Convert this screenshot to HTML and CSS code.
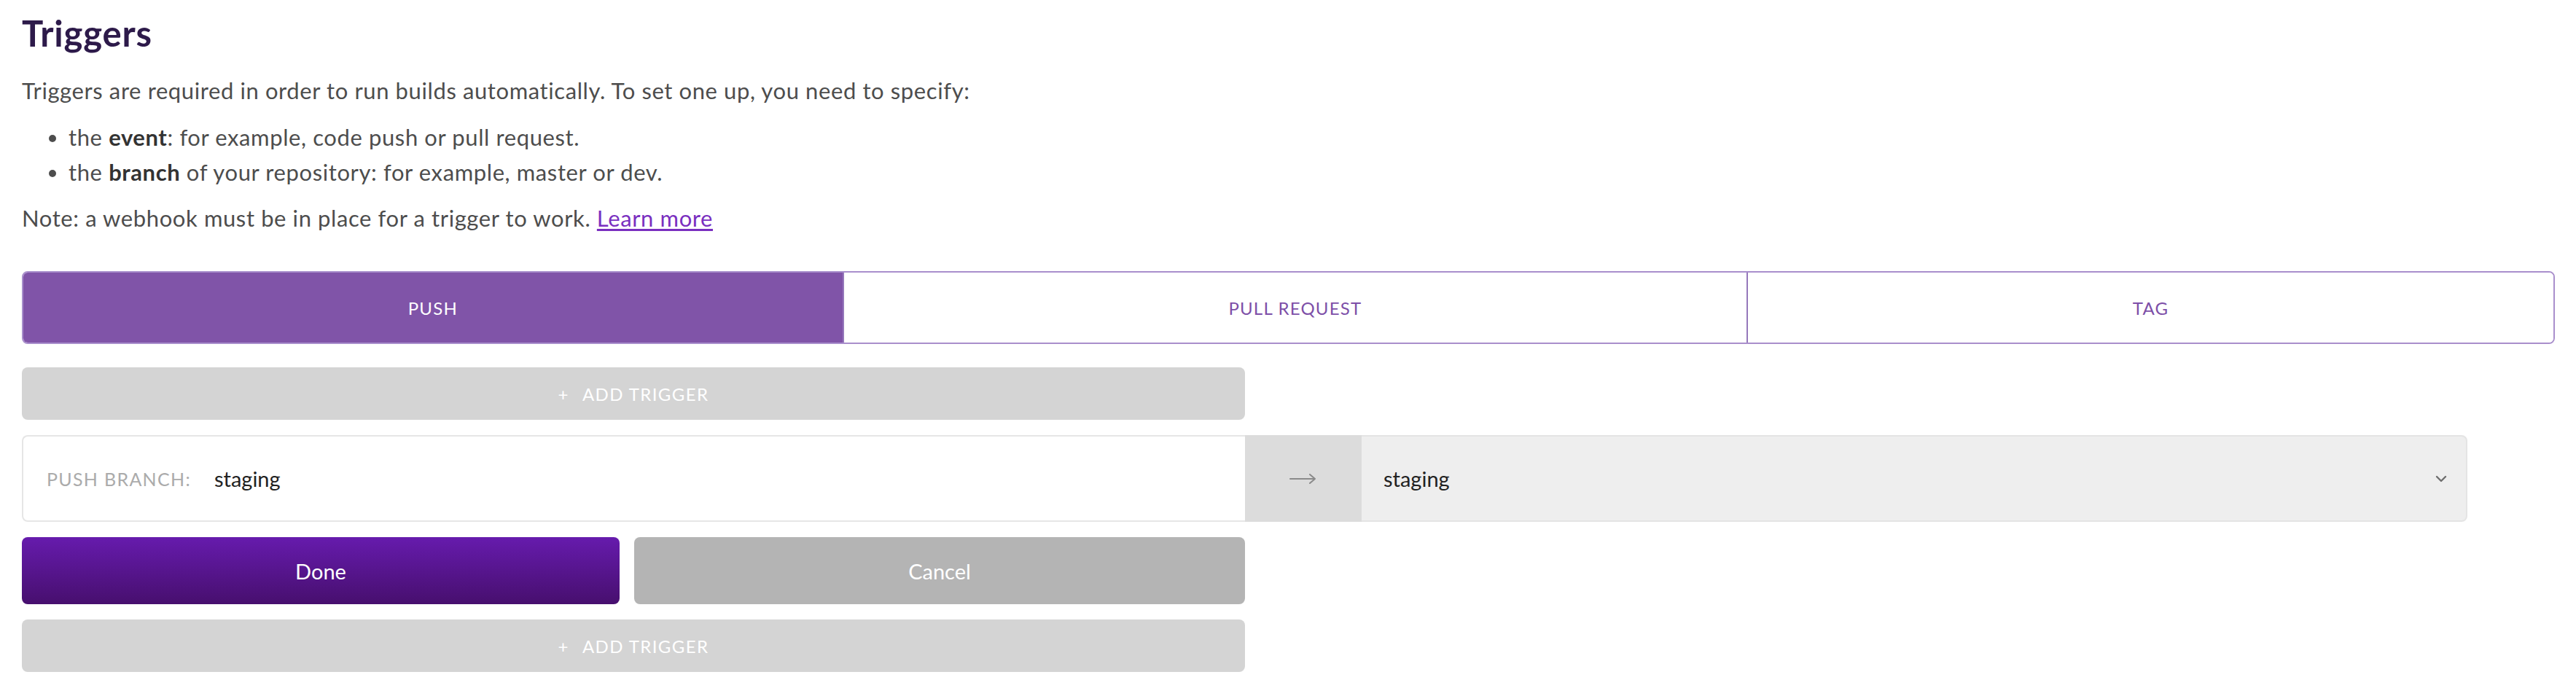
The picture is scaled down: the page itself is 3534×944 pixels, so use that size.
FILE: index.html
```html
<!DOCTYPE html>
<html lang="en">
<head>
<meta charset="utf-8">
<title>Triggers</title>
<link rel="stylesheet" href="styles.css">
</head>
<body>
<main class="page">
  <h1 class="title">Triggers</h1>
  <p class="intro">Triggers are required in order to run builds automatically. To set one up, you need to specify:</p>
  <ul class="list">
    <li>the <b>event</b>: for example, code push or pull request.</li>
    <li>the <b>branch</b> of your repository: for example, master or dev.</li>
  </ul>
  <p class="note">Note: a webhook must be in place for a trigger to work. <a class="link" href="#">Learn more</a></p>

  <div class="tabs">
    <div class="tab tab-active">PUSH</div>
    <div class="tab">PULL REQUEST</div>
    <div class="tab">TAG</div>
  </div>

  <div class="add-btn"><span class="plus">+</span>ADD TRIGGER</div>

  <div class="branch-row">
    <div class="branch-input">
      <span class="branch-label">PUSH BRANCH:</span>
      <span class="branch-value">staging</span>
    </div>
    <div class="branch-arrow">
      <svg width="40" height="16" viewBox="0 0 40 16"><path d="M2 8 H36 M29 2 L36 8 L29 14" fill="none" stroke="#8a8a8a" stroke-width="2" stroke-linecap="round" stroke-linejoin="round"/></svg>
    </div>
    <div class="branch-select">
      <span class="select-value">staging</span>
      <svg class="chevron" width="16" height="10" viewBox="0 0 16 10"><path d="M2 2 L8 8 L14 2" fill="none" stroke="#6e6e6e" stroke-width="2.4" stroke-linecap="round" stroke-linejoin="round"/></svg>
    </div>
  </div>

  <div class="actions">
    <div class="btn btn-done">Done</div>
    <div class="btn btn-cancel">Cancel</div>
  </div>

  <div class="add-btn"><span class="plus">+</span>ADD TRIGGER</div>
</main>
</body>
</html>
```

FILE: styles.css
```css
* { box-sizing: border-box; }
html, body { margin: 0; padding: 0; background: #ffffff; }
body { font-family: Lato, "Open Sans", "Liberation Sans", sans-serif; color: #4d4d4d; }
.page { padding: 16px 29px 0 30px; }

.title {
  margin: 0;
  font-size: 49px;
  line-height: 58px;
  font-weight: 700;
  letter-spacing: 0.8px;
  color: #2d1a4a;
}

.intro {
  margin: 30px 0 0;
  font-size: 31px;
  line-height: 40px;
  letter-spacing: 0.6px;
}

.list {
  margin: 20px 0 0;
  padding: 0 0 0 64px;
  font-size: 31px;
  line-height: 48px;
  letter-spacing: 0.6px;
}
.list b { color: #333; font-weight: 700; }

.note {
  margin: 19px 0 0;
  font-size: 31px;
  line-height: 40px;
  letter-spacing: 0.6px;
}
.link { color: #7a2fc0; text-decoration: underline; text-underline-offset: 3px; }

.tabs {
  margin-top: 53px;
  display: flex;
  height: 100px;
  border: 2px solid #a98fcc;
  border-radius: 8px;
  overflow: hidden;
}
.tab {
  flex: 1 1 auto;
  display: flex;
  align-items: center;
  justify-content: center;
  font-size: 24px;
  letter-spacing: 1.2px;
  color: #7d4fa8;
  background: #fff;
}
.tab + .tab { border-left: 2px solid #9578bb; }
.tab-active { background: #8054a8; color: #fff; }

.add-btn {
  margin-top: 32px;
  width: 1678px;
  height: 72px;
  border-radius: 8px;
  background: #d4d4d4;
  color: #fff;
  display: flex;
  align-items: center;
  justify-content: center;
  font-size: 24px;
  letter-spacing: 1.4px;
}
.plus { margin-right: 18px; }

.branch-row {
  margin-top: 21px;
  display: flex;
  height: 119px;
}
.branch-input {
  width: 1678px;
  display: flex;
  align-items: center;
  padding-left: 32px;
  border: 2px solid #e6e6e6;
  border-right: none;
  border-radius: 8px 0 0 8px;
  background: #fff;
}
.branch-label {
  font-size: 25px;
  letter-spacing: 1.3px;
  color: #ababab;
  margin-right: 32px;
}
.branch-value { font-size: 29px; color: #222; }
.branch-arrow {
  width: 160px;
  display: flex;
  align-items: center;
  justify-content: center;
  background: #dcdcdc;
}
.branch-select {
  width: 1517px;
  display: flex;
  align-items: center;
  justify-content: space-between;
  padding: 0 26px 0 30px;
  background: #eeeeee;
  border: 2px solid #e4e4e4;
  border-left: none;
  border-radius: 0 8px 8px 0;
}
.select-value { font-size: 29px; color: #222; }

.actions {
  margin-top: 21px;
  width: 1678px;
  display: flex;
  gap: 20px;
}
.btn {
  height: 92px;
  border-radius: 8px;
  display: flex;
  align-items: center;
  justify-content: center;
  color: #fff;
  font-size: 29px;
}
.btn-done { flex: 820 1 0; background: linear-gradient(#661bad, #470f6e); }
.btn-cancel { flex: 838 1 0; background: #b4b4b4; }

.actions + .add-btn { margin-top: 21px; }
```
